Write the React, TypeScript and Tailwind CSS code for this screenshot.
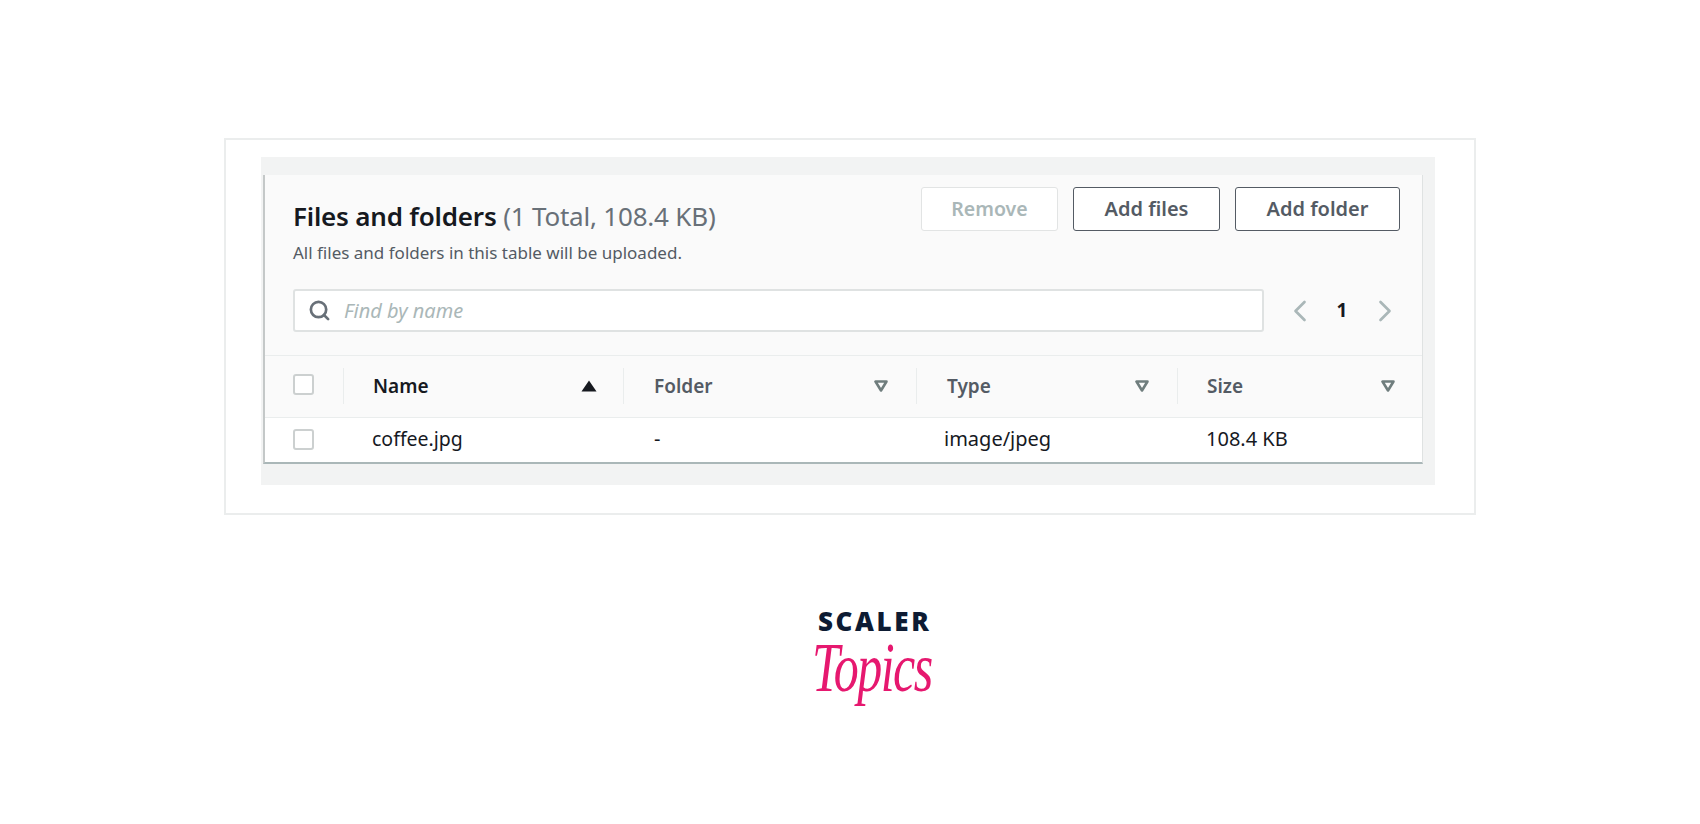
import React from 'react';
import { ChevronLeft, ChevronRight, Search } from 'lucide-react';

const FilterIcon: React.FC = () => (
  <svg width="14" height="12" viewBox="0 0 14 12" className="shrink-0">
    <path d="M1.5 1.5 H12.5 L7 10.5 Z" fill="none" stroke="#6f7d7d" strokeWidth="2.6" strokeLinejoin="round" />
  </svg>
);

const SortIcon: React.FC = () => (
  <svg width="16" height="12" viewBox="0 0 16 12" className="shrink-0">
    <path d="M8 0.5 L15.5 11.5 H0.5 Z" fill="#16191f" />
  </svg>
);

const Checkbox: React.FC = () => (
  <div className="h-[21px] w-[21px] rounded-[3px] border-2 border-[#ccd0d0] bg-white" />
);

const Header: React.FC<{ label: string; className: string; active?: boolean }> = ({ label, className, active }) => (
  <div className={`flex h-[36px] items-center justify-between border-l border-[#eaeded] ${className}`}>
    <span className={`text-[19px] font-semibold ${active ? 'text-[#16191f]' : 'text-[#545b64]'}`}>{label}</span>
    {active ? <SortIcon /> : <FilterIcon />}
  </div>
);

export default function App() {
  return (
    <div className="h-[824px] w-[1700px] overflow-hidden bg-white pt-[138px] pl-[224px] font-['Noto_Sans','Open_Sans',sans-serif]">
      <div className="h-[377px] w-[1252px] border-2 border-[#ebeded] pt-[17px] pl-[35px]">
        <div className="h-[328px] w-[1174px] bg-[#f2f3f3] pt-[18px] pl-[2px]">
          <div className="h-[289px] w-[1160px] border-r border-b-2 border-l-2 border-r-[#dfe2e2] border-b-[#aab7b8] border-l-[#c4c8c8] bg-[#fafafa]">
            <div className="flex h-[114px] items-start justify-between pt-[12px] pr-[22px] pl-[28px]">
              <div className="pt-[12px]">
                <h1 className="text-[26px] leading-[34px] font-semibold tracking-[-0.2px] text-[#16191f]">
                  Files and folders <span className="font-normal text-[#687078]">(1 Total, 108.4 KB)</span>
                </h1>
                <p className="mt-[9px] text-[17px] leading-[22px] text-[#545b64]">All files and folders in this table will be uploaded.</p>
              </div>
              <div className="flex gap-[15px]">
                <button className="h-[44px] w-[137px] rounded-[3px] border border-[#e2e4e4] bg-white text-[19.5px] font-semibold text-[#aab7b8]">Remove</button>
                <button className="h-[44px] w-[147px] rounded-[3px] border border-[#545b64] bg-white text-[20px] font-semibold text-[#545b64]">Add files</button>
                <button className="h-[44px] w-[165px] rounded-[3px] border border-[#545b64] bg-white text-[20px] font-semibold text-[#545b64]">Add folder</button>
              </div>
            </div>
            <div className="flex h-[66px] items-start pl-[28px]">
              <div className="flex h-[43px] w-[971px] items-center rounded-[3px] border-2 border-[#dfe2e2] bg-white pl-[13px]">
                <Search size={23} strokeWidth={2.8} className="text-[#687078]" />
                <span className="ml-[13px] text-[20px] text-[#aab7b8] italic">Find by name</span>
              </div>
              <div className="flex h-[43px] items-center pl-[18px]">
                <ChevronLeft size={36} strokeWidth={1.8} className="text-[#aab7b8]" />
                <span className="ml-[12px] w-[24px] text-center text-[19px] font-bold text-[#16191f]">1</span>
                <ChevronRight size={36} strokeWidth={1.8} className="ml-[13px] text-[#aab7b8]" />
              </div>
            </div>
            <div className="flex h-[63px] items-center border-t border-b border-[#eaeded] pb-[1px] pl-[28px]">
              <div className="-mt-[3px] w-[50px]"><Checkbox /></div>
              <Header label="Name" active className="w-[280px] pr-[26px] pl-[29px]" />
              <Header label="Folder" className="w-[293px] pr-[28px] pl-[30px]" />
              <Header label="Type" className="w-[261px] pr-[28px] pl-[30px]" />
              <Header label="Size" className="w-[238px] pr-[20px] pl-[29px]" />
            </div>
            <div className="flex h-[44px] items-center bg-white pb-[2px] pl-[28px] text-[20px] text-[#16191f]">
              <div className="w-[79px]"><Checkbox /></div>
              <span className="w-[282px] text-[19.5px]">coffee.jpg</span>
              <span className="w-[290px]">-</span>
              <span className="w-[262px]">image/jpeg</span>
              <span>108.4 KB</span>
            </div>
          </div>
        </div>
      </div>
      <div className="mt-[94px] ml-[589px] w-[125px]">
        <div className="pl-[5px] text-[26px] leading-[24px] font-extrabold tracking-[2.6px] text-[#0d1b33] font-['Open_Sans',sans-serif]">SCALER</div>
        <div className="mt-[5px] -ml-[1px] origin-center scale-y-[1.4] text-[50px] leading-[58px] tracking-[-1.5px] text-[#e6186f] italic font-['Liberation_Serif',serif]">Topics</div>
      </div>
    </div>
  );
}
